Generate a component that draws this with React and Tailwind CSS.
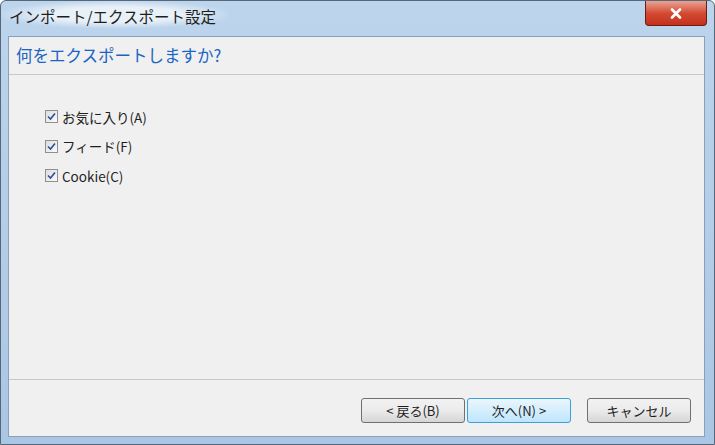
const jp = { fontFamily: '"Noto Sans CJK JP", "Noto Sans", sans-serif' }

function CheckRow({ label }) {
  return (
    <label className="flex items-center gap-[4px] h-[29.5px]">
      <span className="w-[13px] h-[13px] border border-[#8f8f8f] bg-gradient-to-br from-[#dcdcdc] to-[#fbfbfb] flex items-center justify-center">
        <svg width="9" height="9" viewBox="0 0 9 9">
          <path d="M1 4.5 L3.5 7 L8 1.5" fill="none" stroke="#2a4f9c" strokeWidth="1.6" />
        </svg>
      </span>
      <span className="text-[13.5px] text-[#1e1e1e]">{label}</span>
    </label>
  )
}

function Btn({ children, active }) {
  return (
    <button
      className={`h-[25px] w-[104px] rounded-[3px] border text-[13px] text-[#1e1e1e] flex items-center justify-center ${
        active
          ? 'border-[#3c9fd6] bg-gradient-to-b from-[#eaf6fd] to-[#bee6fd]'
          : 'border-[#707070] bg-gradient-to-b from-[#f2f2f2] via-[#ebebeb] to-[#d6d6d6]'
      }`}
    >
      {children}
    </button>
  )
}

export default function App() {
  return (
    <div style={jp} className="w-[715px] h-[445px] bg-gradient-to-b from-[#bcd4ec] via-[#b4cde8] to-[#aac6e5] border border-[#56677a] rounded-t-[6px] flex flex-col overflow-hidden">
      {/* Title bar */}
      <div className="h-[35px] flex items-start justify-between">
        <div className="pl-[8px] pt-[4px] pr-3 text-[15.5px] text-[#1e1e1e] bg-[radial-gradient(ellipse_at_center,_#e8f0f8_40%,_transparent_75%)]">
          インポート/エクスポート設定
        </div>
        <div className="mr-[7px] w-[62px] h-[25px] rounded-b-[4px] border border-[#6b1d14] border-t-0 bg-gradient-to-b from-[#e8a294] via-[#d44a32] to-[#c4301c] flex items-center justify-center">
          <svg width="12" height="11" viewBox="0 0 12 11">
            <path d="M2 1.5 L10 9.5 M10 1.5 L2 9.5" stroke="#ffffff" strokeWidth="2.6" strokeLinecap="round" />
          </svg>
        </div>
      </div>

      {/* Client area */}
      <div className="ml-[7px] mr-[9px] mb-[7px] flex-1 border border-[#8aa0b8] bg-[#f0f0f0] flex flex-col">
        <div className="h-[38px] flex items-center pl-[7px] border-b border-[#c8c8c8]">
          <span className="text-[16.5px] text-[#1a64c4]">何をエクスポートしますか?</span>
        </div>
        <div className="flex-1 border-b border-[#c8c8c8] pt-[27px] pl-[36px] flex flex-col">
          <CheckRow label="お気に入り(A)" />
          <CheckRow label="フィード(F)" />
          <CheckRow label="Cookie(C)" />
        </div>
        <div className="h-[56px] flex items-start pt-[18px] pr-[13px] justify-end">
          <div className="flex gap-[2px]">
            <Btn>&lt; 戻る(B)</Btn>
            <Btn active>次へ(N) &gt;</Btn>
          </div>
          <div className="ml-[16px]">
            <Btn>キャンセル</Btn>
          </div>
        </div>
      </div>
    </div>
  )
}
